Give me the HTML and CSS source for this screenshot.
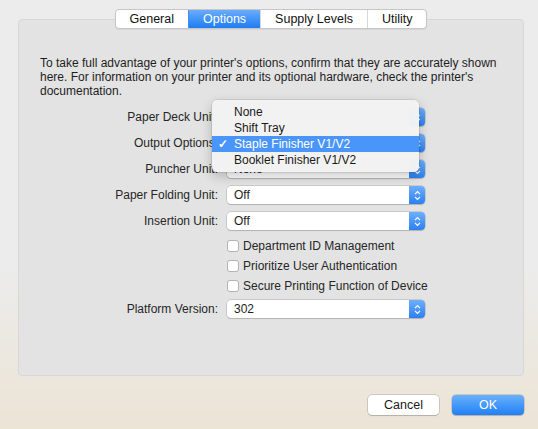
FILE: index.html
```html
<!DOCTYPE html>
<html lang="en">
<head>
    <meta charset="UTF-8">
    <title>Printer Options</title>
    <link rel="stylesheet" href="styles.css">
</head>
<body>
    <div class="window">
        <div class="tabs">
            <div class="tab">General</div>
            <div class="tab active">Options</div>
            <div class="tab">Supply Levels</div>
            <div class="tab">Utility</div>
        </div>

        <div class="panel">
            <p class="intro">To take full advantage of your printer's options, confirm that they are accurately shown here. For information on your printer and its optional hardware, check the printer's documentation.</p>

            <div class="form">
                <div class="row">
                    <label>Paper Deck Unit:</label>
                    <div class="select"><span class="value"></span><i class="stepper"><svg width="7" height="11" viewBox="0 0 7 11"><path d="M1 4.2 L3.5 1.7 L6 4.2 M1 6.8 L3.5 9.3 L6 6.8" fill="none" stroke="#fff" stroke-width="1.2"/></svg></i></div>
                </div>
                <div class="row">
                    <label>Output Options:</label>
                    <div class="select"><span class="value"></span><i class="stepper"><svg width="7" height="11" viewBox="0 0 7 11"><path d="M1 4.2 L3.5 1.7 L6 4.2 M1 6.8 L3.5 9.3 L6 6.8" fill="none" stroke="#fff" stroke-width="1.2"/></svg></i></div>
                </div>
                <div class="row">
                    <label>Puncher Unit:</label>
                    <div class="select"><span class="value">None</span><i class="stepper"><svg width="7" height="11" viewBox="0 0 7 11"><path d="M1 4.2 L3.5 1.7 L6 4.2 M1 6.8 L3.5 9.3 L6 6.8" fill="none" stroke="#fff" stroke-width="1.2"/></svg></i></div>
                </div>
                <div class="row">
                    <label>Paper Folding Unit:</label>
                    <div class="select"><span class="value">Off</span><i class="stepper"><svg width="7" height="11" viewBox="0 0 7 11"><path d="M1 4.2 L3.5 1.7 L6 4.2 M1 6.8 L3.5 9.3 L6 6.8" fill="none" stroke="#fff" stroke-width="1.2"/></svg></i></div>
                </div>
                <div class="row">
                    <label>Insertion Unit:</label>
                    <div class="select"><span class="value">Off</span><i class="stepper"><svg width="7" height="11" viewBox="0 0 7 11"><path d="M1 4.2 L3.5 1.7 L6 4.2 M1 6.8 L3.5 9.3 L6 6.8" fill="none" stroke="#fff" stroke-width="1.2"/></svg></i></div>
                </div>

                <div class="check-row first"><span class="box"></span>Department ID Management</div>
                <div class="check-row"><span class="box"></span>Prioritize User Authentication</div>
                <div class="check-row"><span class="box"></span>Secure Printing Function of Device</div>

                <div class="row">
                    <label>Platform Version:</label>
                    <div class="select"><span class="value">302</span><i class="stepper"><svg width="7" height="11" viewBox="0 0 7 11"><path d="M1 4.2 L3.5 1.7 L6 4.2 M1 6.8 L3.5 9.3 L6 6.8" fill="none" stroke="#fff" stroke-width="1.2"/></svg></i></div>
                </div>
            </div>

            <!-- open pop-up for Output Options -->
            <div class="menu">
                <div class="menu-item">None</div>
                <div class="menu-item">Shift Tray</div>
                <div class="menu-item selected"><span class="check">✓</span>Staple Finisher V1/V2</div>
                <div class="menu-item">Booklet Finisher V1/V2</div>
            </div>
        </div>

        <div class="buttons">
            <button class="btn">Cancel</button>
            <button class="btn primary">OK</button>
        </div>
    </div>
</body>
</html>
```

FILE: styles.css
```css
body {
    margin: 0;
    width: 538px;
    height: 429px;
    overflow: hidden;
    font-family: "Liberation Sans", Arial, sans-serif;
    font-size: 12px;
    color: #222;
    background: linear-gradient(to bottom, #ececec 0, #ececec 62%, #ece4d5 100%);
}
.window {
    padding: 9px 14px 0 18px;
}
.tabs {
    display: flex;
    width: max-content;
    margin: 0 auto -10px;
    position: relative;
    z-index: 1;
    background: #fff;
    border: 1px solid #c6c6c6;
    border-radius: 4px;
    box-shadow: 0 1px 1px rgba(0, 0, 0, 0.06);
    overflow: hidden;
}
.tab {
    height: 18px;
    line-height: 18px;
    padding: 0 14px;
    font-size: 12.5px;
    color: #111;
    border-left: 1px solid #d8d8d8;
}
.tab:first-child {
    border-left: none;
}
.tab.active {
    background: linear-gradient(#6aacfc, #1f7cf3);
    color: #fff;
    border-left-color: #3d8ef6;
}
.panel {
    position: relative;
    box-sizing: border-box;
    height: 357px;
    padding: 36px 20px 0 21px;
    background: #e3e3e3;
    border: 1px solid #d7d7d7;
    border-radius: 4px;
}
.intro {
    margin: 0;
    line-height: 14px;
    color: #1e1e1e;
}
.form {
    margin-top: 6px;
}
.row {
    display: flex;
    align-items: center;
    gap: 9px;
    height: 26px;
}
.row label {
    width: 178px;
    text-align: right;
    color: #262626;
}
.select {
    display: flex;
    align-items: stretch;
    width: 198px;
    height: 18px;
    background: #fff;
    border-radius: 4px;
    box-shadow: 0 0 0 0.5px rgba(0, 0, 0, 0.22), 0 1px 1px rgba(0, 0, 0, 0.12);
}
.select .value {
    flex: 1;
    padding-left: 7px;
    line-height: 18px;
    color: #1e1e1e;
}
.stepper {
    display: flex;
    align-items: center;
    justify-content: center;
    width: 16px;
    border-radius: 0 4px 4px 0;
    background: linear-gradient(#6caffc, #2d80f3);
}
.check-row {
    display: flex;
    align-items: center;
    height: 20px;
    padding-left: 187px;
    color: #262626;
}
.check-row.first {
    margin-top: 2px;
}
.box {
    width: 12px;
    height: 12px;
    margin-right: 4px;
    box-sizing: border-box;
    background: #fff;
    border: 1px solid #b3b3b3;
    border-radius: 3px;
}
.menu {
    position: absolute;
    left: 193px;
    top: 80px;
    width: 207px;
    padding: 4px 0;
    background: rgba(242, 242, 242, 0.98);
    border-radius: 5px;
    box-shadow: 0 0 0 0.5px rgba(0, 0, 0, 0.15), 0 4px 12px rgba(0, 0, 0, 0.22);
}
.menu-item {
    position: relative;
    height: 16px;
    line-height: 16px;
    padding-left: 22px;
    color: #1a1a1a;
}
.menu-item.selected {
    background: #4a95f9;
    color: #fff;
}
.check {
    position: absolute;
    left: 6px;
    font-size: 12px;
    font-weight: bold;
}
.buttons {
    display: flex;
    justify-content: flex-end;
    gap: 13px;
    margin-top: 19px;
}
.btn {
    width: 71px;
    height: 20px;
    padding: 0;
    font-family: inherit;
    font-size: 12.5px;
    color: #1a1a1a;
    background: #fff;
    border: none;
    border-radius: 4px;
    box-shadow: 0 0 0 0.5px rgba(0, 0, 0, 0.25), 0 1px 1px rgba(0, 0, 0, 0.12);
}
.btn.primary {
    width: 72px;
    color: #fff;
    background: linear-gradient(#6ab1fc, #2180f5);
}
```
